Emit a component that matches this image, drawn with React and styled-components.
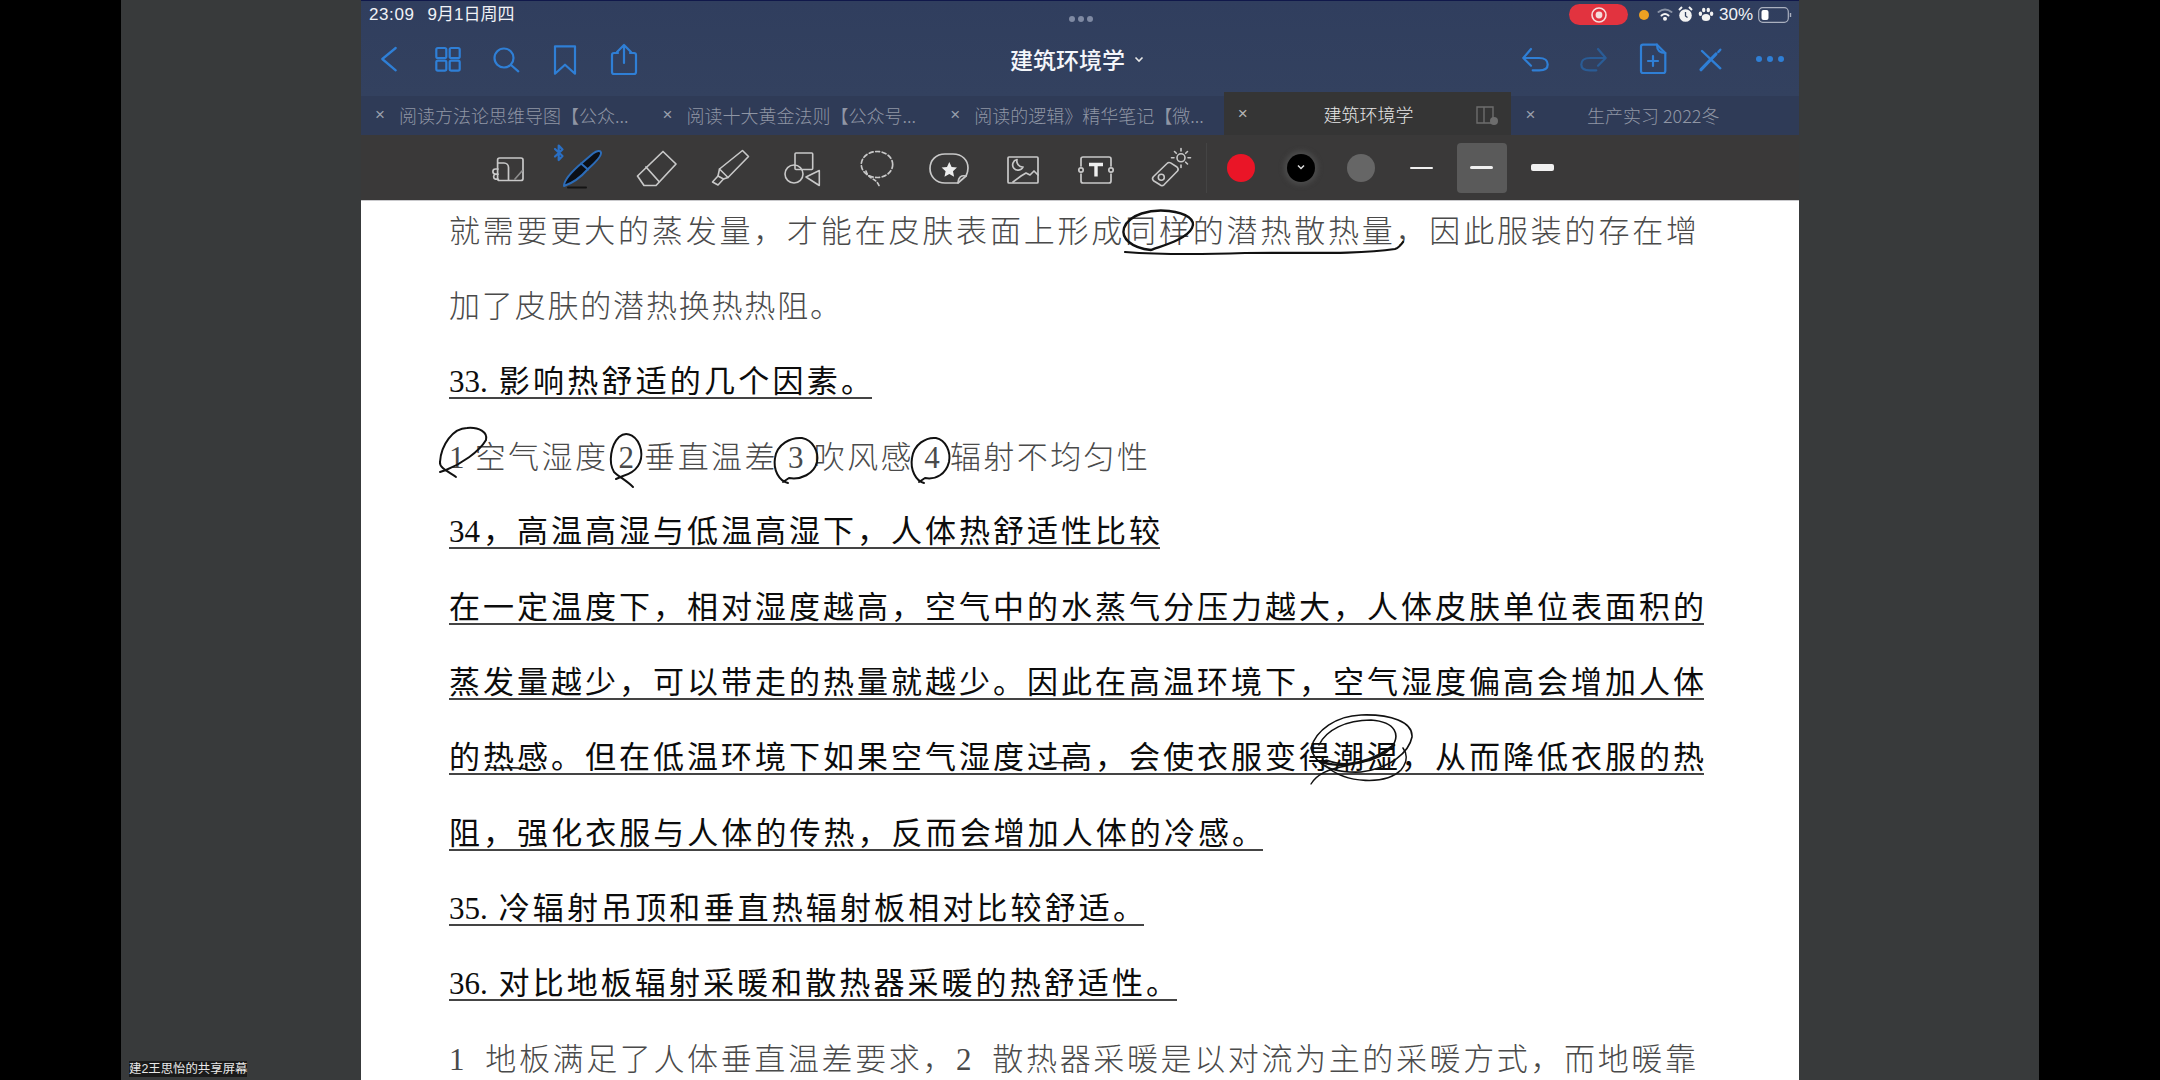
import React from "react";
import styled, { createGlobalStyle } from "styled-components";

const Global = createGlobalStyle`
  html, body { margin: 0; padding: 0; background: #000; }
  body { width: 2160px; height: 1080px; overflow: hidden; font-family: "Liberation Sans", "Noto Sans CJK SC", sans-serif; }
`;

const Screen = styled.div`
  width: 2160px; height: 1080px; display: grid;
  grid-template-columns: 121px 240px 1438px 240px 121px;
  background: #000; overflow: hidden;
`;
const Black = styled.div`background: #000;`;
const Gutter = styled.div`background: #383a3b; position: relative;`;
const ShareLabel = styled.div`
  position: absolute; left: 8px; bottom: 3px; padding: 1px 0; background: #1a1a1a;
  color: #e8e8e8; font-size: 12.4px; line-height: 14px; white-space: nowrap;
`;
const App = styled.div`display: flex; flex-direction: column; height: 1080px; background: #fff; overflow: hidden;`;
const Header = styled.div`background: linear-gradient(#303e5e, #33415f); border-top: 1px solid #10184a; height: 95px; flex: none;`;
const Status = styled.div`
  height: 27px; display: grid; grid-template-columns: 1fr auto 1fr; align-items: center;
  padding: 0 7px 0 8px; color: #f0f2f6; font-size: 17px; line-height: 20px;
`;
const StatusLeft = styled.div`display: flex; align-items: center; gap: 13px;`;
const Time = styled.span`letter-spacing: .6px;`;
const Dots = styled.div`display: flex; gap: 3px; padding-top: 8px;`;
const Dot = styled.span`width: 6px; height: 6px; border-radius: 50%; background: #7f8aa3;`;
const StatusRight = styled.div`display: flex; align-items: center; justify-content: flex-end; gap: 5px;`;
const RecPill = styled.div`
  width: 59px; height: 21px; border-radius: 11px; background: #e2333f; display: flex;
  align-items: center; justify-content: center; margin-right: 6px;
`;
const Orange = styled.span`width: 10px; height: 10px; border-radius: 50%; background: #eda122; margin-right: 2.5px;`;
const Nav = styled.div`height: 62px; display: grid; grid-template-columns: 1fr auto 1fr; align-items: center;`;
const NavGroup = styled.div`display: flex; justify-content: ${p => p.$end ? "flex-end" : "flex-start"}; margin-left: ${p => p.$end ? 0 : -1}px;`;
const NavBtn = styled.div`width: 58.6px; height: 40px; display: flex; align-items: center; justify-content: center; color: ${p => p.$dim ? "#2a5c96" : "#2f7fd6"};`;
const Title = styled.div`display: flex; align-items: center; gap: 9px; margin-left: -6px; color: #f4f6fa; font-size: 23px; font-weight: 500; font-family: "Noto Sans CJK SC", sans-serif;`;
const Tabs = styled.div`height: 39px; flex: none; display: grid; grid-template-columns: repeat(5, 1fr); background: #2f3b57;`;
const Tab = styled.div`
  position: relative; display: flex; align-items: center; padding: 0 0 ${p => p.$active ? 0 : 2}px 14px; gap: 13px; min-width: 0;
  color: ${p => p.$active ? "#e6e6e6" : "#8f96a5"}; font-size: 18px; font-family: "Noto Sans CJK SC", sans-serif;
  font-weight: 300; background: ${p => p.$active ? "#353535" : "transparent"};
  ${p => p.$active ? "margin-top: -4px;" : ""}
`;
const Close = styled.span`font-size: 17px; color: ${p => p.$active ? "#b5b5b5" : "#9aa0ad"}; width: 11px; flex: none; font-family: "Liberation Sans", sans-serif;`;
const TabName = styled.span`white-space: nowrap; ${p => p.$center ? "flex: 1; text-align: center; padding-right: " + p.$center + "px;" : ""}`;
const SplitIcon = styled.span`position: absolute; right: 12px; top: 12px; color: #6d6d6d; display: flex;`;
const Toolbar = styled.div`
  height: 65px; flex: none; background: #3a3939; border-bottom: 1px solid #c9c9cc; display: flex; align-items: center; padding-left: 110px;
`;
const Tool = styled.div`width: 73.55px; height: 64px; flex: none; display: flex; align-items: center; justify-content: center; color: #c8c8c8;`;
const Divider = styled.div`width: 1px; height: 50px; flex: none; background: #444; margin: 0 3.5px 0 0;`;
const Swatch = styled.div`width: 60.2px; height: 64px; flex: none; display: flex; align-items: center; justify-content: center;`;
const Color = styled.span`
  width: 28px; height: 28px; border-radius: 50%; background: ${p => p.$c}; display: flex; align-items: center; justify-content: center;
  ${p => p.$ring ? "box-shadow: 0 0 5px 3px #4c4c4c;" : ""}
`;
const StrokeBox = styled.div`
  width: 50px; height: 50px; border-radius: 4px; display: flex; align-items: center; justify-content: center;
  background: ${p => p.$on ? "#5a5a5a" : "transparent"};
`;
const Stroke = styled.span`width: 23px; height: ${p => p.$h}px; border-radius: 2px; background: #f0f0f0;`;

const Doc = styled.div`position: relative; flex: 1; background: #fff; padding-left: 88px; overflow: hidden;`;
const Lines = styled.div`margin-top: -6.5px; display: flex; flex-direction: column;`;
const Row = styled.div`height: 75.3px; display: flex; align-items: center;`;
const Text = styled.div`
  width: ${p => p.$w}px; height: 30px; line-height: 30px; font-size: 31px;
  text-align: justify; text-align-last: justify; text-justify: inter-character; white-space: nowrap;
  font-family: "Liberation Serif", "Noto Sans CJK SC", serif;
  font-weight: ${p => p.$strong ? 400 : 300};
  color: ${p => p.$strong ? "#0c0c0c" : "#4a4a4a"};
  ${p => p.$strong ? "border-bottom: 2px solid #444;" : ""}
`;
const Ink = styled.svg`position: absolute; left: 0; top: -1px; width: 1438px; height: 880px; pointer-events: none;`;

const N = ({ children, sw = 2.2 }) => (
  <svg width="34" height="34" viewBox="0 0 34 34" fill="none" stroke="currentColor" strokeWidth={sw} strokeLinecap="round" strokeLinejoin="round">{children}</svg>
);
const T = ({ children, sw = 1.7 }) => (
  <svg width="60" height="60" viewBox="0 0 60 60" fill="none" stroke="currentColor" strokeWidth={sw} strokeLinecap="round" strokeLinejoin="round">{children}</svg>
);

const lines = [
  { w: 1248, t: "就需要更大的蒸发量，才能在皮肤表面上形成同样的潜热散热量，因此服装的存在增" },
  { w: 392, t: "加了皮肤的潜热换热热阻。" },
  { w: 423, s: 1, t: "33. 影响热舒适的几个因素。" },
  { w: 699, t: "1 空气湿度 2 垂直温差 3 吹风感 4 辐射不均匀性" },
  { w: 711, s: 1, t: "34，高温高湿与低温高湿下，人体热舒适性比较" },
  { w: 1255, s: 1, t: "在一定温度下，相对湿度越高，空气中的水蒸气分压力越大，人体皮肤单位表面积的" },
  { w: 1255, s: 1, t: "蒸发量越少，可以带走的热量就越少。因此在高温环境下，空气湿度偏高会增加人体" },
  { w: 1255, s: 1, t: "的热感。但在低温环境下如果空气湿度过高，会使衣服变得潮湿，从而降低衣服的热" },
  { w: 814, s: 1, t: "阻，强化衣服与人体的传热，反而会增加人体的冷感。" },
  { w: 695, s: 1, t: "35. 冷辐射吊顶和垂直热辐射板相对比较舒适。" },
  { w: 728, s: 1, t: "36. 对比地板辐射采暖和散热器采暖的热舒适性。" },
  { w: 1247, t: "1\u00a0\u00a0地板满足了人体垂直温差要求，2\u00a0\u00a0散热器采暖是以对流为主的采暖方式，而地暖靠" },
];

export default function Page() {
  return (
    <Screen>
      <Global />
      <Black />
      <Gutter><ShareLabel>建2王思怡的共享屏幕</ShareLabel></Gutter>
      <App>
        <Header>
          <Status>
            <StatusLeft><Time>23:09</Time><span>9月1日周四</span></StatusLeft>
            <Dots><Dot /><Dot /><Dot /></Dots>
            <StatusRight>
              <RecPill>
                <svg width="18" height="18" viewBox="0 0 18 18"><circle cx="9" cy="9" r="7" fill="none" stroke="#f6dcdc" strokeWidth="1.6" /><circle cx="9" cy="9" r="3.4" fill="#f6dcdc" /></svg>
              </RecPill>
              <Orange />
              <svg width="16" height="13" viewBox="0 0 16 13" fill="none" strokeWidth="2" strokeLinecap="round"><path d="M1.5 4C5.5 1 10.5 1 14.5 4" stroke="#8a93a6" /><path d="M4.5 7.5C6.8 5.6 9.2 5.6 11.5 7.5" stroke="#f2f2f2" /><circle cx="8" cy="10.8" r="1" fill="#f2f2f2" stroke="#f2f2f2" /></svg>
              <svg width="15" height="17" viewBox="0 0 15 17"><circle cx="7.5" cy="9.5" r="6.3" fill="#f2f2f2" /><path d="M7.5 6v4l2 1.5" stroke="#33415f" strokeWidth="1.3" fill="none" /><path d="M1 4l3-3M14 4l-3-3" stroke="#f2f2f2" strokeWidth="2" /></svg>
              <svg width="16" height="15" viewBox="0 0 16 15" fill="#f2f2f2"><ellipse cx="8" cy="10.5" rx="4.2" ry="3.6" /><ellipse cx="2.4" cy="6.7" rx="1.7" ry="2.2" /><ellipse cx="13.6" cy="6.7" rx="1.7" ry="2.2" /><ellipse cx="5.7" cy="3" rx="1.7" ry="2.3" /><ellipse cx="10.3" cy="3" rx="1.7" ry="2.3" /></svg>
              <span>30%</span>
              <svg width="34" height="18" viewBox="0 0 34 18"><rect x=".7" y="1.7" width="29.6" height="14.6" rx="4" fill="none" stroke="#aab0bf" strokeWidth="1.2" /><rect x="3.5" y="4" width="7" height="10" rx="2" fill="#fff" /><path d="M32.5 7v4" stroke="#aab0bf" strokeWidth="1.4" /></svg>
            </StatusRight>
          </Status>
          <Nav>
            <NavGroup>
              <NavBtn><N sw={2.3}><path d="M23.7 6 10.3 17l13.4 11.3" /></N></NavBtn>
              <NavBtn><N><rect x="5.3" y="6" width="10" height="10" rx="1.6" /><rect x="18.7" y="6" width="10" height="10" rx="1.6" /><rect x="5.3" y="18.7" width="10" height="10" rx="1.6" /><rect x="18.7" y="18.7" width="10" height="10" rx="1.6" /></N></NavBtn>
              <NavBtn><N><circle cx="15" cy="16" r="9.5" /><path d="m22 23 7.3 6.3" /></N></NavBtn>
              <NavBtn><N><path d="M7 4.3H27V31.7L17 22.7 7 31.7z" /></N></NavBtn>
              <NavBtn><N><path d="M11 11H7a2 2 0 0 0-2 2v17a2 2 0 0 0 2 2h20a2 2 0 0 0 2-2V13a2 2 0 0 0-2-2h-4" /><path d="M17 21V3M10 10l7-7 7 7" /></N></NavBtn>
            </NavGroup>
            <Title>
              建筑环境学
              <svg width="10" height="7" viewBox="0 0 10 7" fill="none" stroke="#e8e8e8" strokeWidth="1.6"><path d="m1.5 1.5 3.5 3.5 3.5-3.5" /></svg>
            </Title>
            <NavGroup $end>
              <NavBtn><N><path d="M13 7 5.3 16l7.7 7.7" /><path d="M6 16H21C27 16 29.7 19 29.7 22.5 29.7 26 27 28.3 21.3 28.3H14.7" /></N></NavBtn>
              <NavBtn $dim><N><g transform="matrix(-1 0 0 1 34 0)"><path d="M13 7 5.3 16l7.7 7.7" /><path d="M6 16H21C27 16 29.7 19 29.7 22.5 29.7 26 27 28.3 21.3 28.3H14.7" /></g></N></NavBtn>
              <NavBtn><N><path d="M7 2.7H21L29.3 11V29a2 2 0 0 1-2 2H7a2 2 0 0 1-2-2V4.7a2 2 0 0 1 2-2z" /><path d="M21 2.7C21 8 23 10.7 29.3 11" /><path d="M17 14v10M12 19h10" /></N></NavBtn>
              <NavBtn><N sw={2.4}><path d="M8 9 26.3 26.3" /><path d="M7 27.7 22 12" strokeWidth="3.2" /><path d="M24.3 10l2-2.3" /></N></NavBtn>
              <NavBtn><svg width="32" height="8" viewBox="0 0 32 8" fill="currentColor"><circle cx="5" cy="4" r="3" /><circle cx="16" cy="4" r="3" /><circle cx="27" cy="4" r="3" /></svg></NavBtn>
            </NavGroup>
          </Nav>
        </Header>
        <Tabs>
          <Tab><Close>×</Close><TabName>阅读方法论思维导图【公众...</TabName></Tab>
          <Tab><Close>×</Close><TabName>阅读十大黄金法则【公众号...</TabName></Tab>
          <Tab><Close>×</Close><TabName>阅读的逻辑》精华笔记【微...</TabName></Tab>
          <Tab $active>
            <Close $active>×</Close><TabName $center={36}>建筑环境学</TabName>
            <SplitIcon><svg width="24" height="24" viewBox="0 0 24 24" fill="none" stroke="currentColor" strokeWidth="1.4"><path d="M2 3h16v16H2zM9 3v16" /><circle cx="19" cy="17" r="4" fill="#6d6d6d" stroke="none" /></svg></SplitIcon>
          </Tab>
          <Tab><Close>×</Close><TabName $center={42}>生产实习 2022冬</TabName></Tab>
        </Tabs>
        <Toolbar>
          <Tool><T>
            <rect x="19.6" y="20" width="25.4" height="22.5" rx="2" />
            <path d="M20 25h6a4.5 4.5 0 0 1 4.5 4.5V42" />
            <path d="M20 31h-2.5a2.6 2.6 0 0 0 0 5.2H20M20 36.2h-2.5a2.6 2.6 0 0 0 0 5H20" />
            <path d="M37 41 44 33" stroke="#8c8c8c" />
          </T></Tool>
          <Tool><T>
            <path d="M4 11 11.5 18 7.7 22V7.5L11.5 11.5 4 18.5" stroke="#2a6fc4" strokeWidth="2.2" />
            <path d="M13 48C13 42 20 34 32 24L42 15.5C46 12.5 49.5 12 50 14.5 50.5 17 46 23 37 31 30 39 22 45 13 48Z" fill="#0b0f16" stroke="#2c6cb8" strokeWidth="2" />
            <path d="M30 25.5 37 31.5" stroke="#2c6cb8" strokeWidth="2" />
            <path d="M17 49.5H35" stroke="#141414" strokeWidth="2" />
          </T></Tool>
          <Tool><T>
            <path d="M38 13.5 51 26 31 47.5H19L12.5 38Z" />
            <path d="M21 29 34 43.5" />
          </T></Tool>
          <Tool><T sw={1.6}>
            <path d="M44.5 12.5 50.5 18.5 30 39.5 21.5 31Z" />
            <path d="M21.5 31 20 38 14.5 44 20 47 25.5 41 30 39.5" />
            <path d="M20 38 25.5 41" />
          </T></Tool>
          <Tool><T sw={1.6}>
            <rect x="23" y="15" width="17.7" height="16.5" rx="1" />
            <circle cx="22" cy="36" r="9" />
            <path d="M47.3 32.5V47.5L34 39Z" />
          </T></Tool>
          <Tool><T>
            <ellipse cx="31" cy="26.5" rx="15.7" ry="13" strokeDasharray="4 2.6" />
            <path d="M20 33C22 41 30 40 33 47.5" strokeDasharray="3 2.6" />
          </T></Tool>
          <Tool><T>
            <path d="M26 16H34C43 16 49 22 49 30 49 33 48 36 47 38L39 45H26C17 45 11 38.5 11 30.5 11 22 17 16 26 16Z" />
            <path d="M47 38C42 37 39.5 39 39 45" />
            <path d="M30.3 24l2.3 5 5.4.6-4 3.7 1.1 5.4-4.8-2.7-4.8 2.7 1.1-5.4-4-3.7 5.4-.6z" fill="#ececec" stroke="none" />
          </T></Tool>
          <Tool><T>
            <rect x="15" y="19" width="30" height="26" rx="1" />
            <path d="M24 21.5a5.4 5.4 0 1 0 6 7.5 6 6 0 0 1-6-7.5z" />
            <path d="M20 44 28 38 33 35 37 37 41 33 45 37" />
          </T></Tool>
          <Tool><T>
            <path d="M15 28V21a2 2 0 0 1 2-2H43a2 2 0 0 1 2 2V28M15 36V43a2 2 0 0 0 2 2H43a2 2 0 0 0 2-2V36" />
            <circle cx="15" cy="32" r="2.2" />
            <circle cx="45" cy="32" r="2.2" />
            <path d="M23 26.5H37M30 26.5V38.5" stroke="#efefef" strokeWidth="3.4" strokeLinecap="butt" />
          </T></Tool>
          <Tool><T sw={1.6}>
            <path d="M27 25.5a3 3 0 0 1 3.6-.6L37 29a3 3 0 0 1 .5 4L24 46.8a3 3 0 0 1-4 0l-6.5-4a3 3 0 0 1-.2-4z" />
            <circle cx="21.3" cy="39.2" r="3" />
            <circle cx="41" cy="19.8" r="4" />
            <path d="M41 10.5v2.5M41 27v2.5M31.5 19.8H34M48 19.8h2.5M34.5 13.5l1.8 1.8M47.5 13.5l-1.8 1.8M47.5 26l-1.8-1.8" />
          </T></Tool>
          <Divider />
          <Swatch><Color $c="#ea1527" /></Swatch>
          <Swatch><Color $c="#000" $ring><svg width="10" height="7" viewBox="0 0 10 7" fill="none" stroke="#ddd" strokeWidth="1.5"><path d="m2 1.5 3 3 3-3" /></svg></Color></Swatch>
          <Swatch><Color $c="#666" /></Swatch>
          <Swatch><Stroke $h={2} /></Swatch>
          <Swatch><StrokeBox $on><Stroke $h={3} /></StrokeBox></Swatch>
          <Swatch><Stroke $h={7} /></Swatch>
        </Toolbar>
        <Doc>
          <Lines>
            {lines.map((l, i) => (
              <Row key={i}><Text $w={l.w} $strong={l.s}>{l.t}</Text></Row>
            ))}
          </Lines>
          <Ink viewBox="0 0 1438 880" fill="none" stroke="#111" strokeWidth="2" strokeLinecap="round" strokeLinejoin="round">
            <path d="M790 50C770 48 760 38 763 28 768 14 790 9 808 11 826 13 835 20 831 28 825 40 800 46 790 50" strokeWidth="2.4" />
            <path d="M764 52c40 3 90 2 120 1 50-1 110 2 150-4 3-1 6-4 8-7" strokeWidth="2.2" />
            <path d="M95 277C88 272 78 268 79 262 80 245 92 228 106 228 118 227 127 232 125 240 118 252 100 264 85 270L79 272" />
            <path d="M272 287C265 280 258 277 253 272 247 262 250 245 258 237 266 230 277 236 280 250 282 262 276 272 262 276L255 279" />
            <path d="M427 283C418 281 412 270 414 258 416 244 430 237 441 238 452 240 458 252 456 262 453 274 440 280 428 278L422 282" />
            <path d="M563 283C555 281 549 270 551 258 553 244 565 237 575 238 585 240 590 252 588 262 585 274 575 280 564 278L558 282" />
            <path d="M950 548C955 530 975 516 1000 515 1030 514 1052 522 1051 537 1048 552 1030 568 1000 572 975 573 955 568 950 548" strokeWidth="1.6" />
            <path d="M958 545C965 530 985 520 1010 520 1035 522 1040 535 1030 548 1018 562 985 568 965 560" strokeWidth="1.6" />
            <path d="M960 562C985 570 1015 560 1033 545" strokeWidth="2.6" />
            <path d="M950 584C957 572 972 568 985 566" strokeWidth="1.4" />
            <path d="M965 566C985 584 1025 585 1040 570 1048 560 1045 552 1042 548" strokeWidth="1.6" />
            <path d="M127 567c12 3 30-2 40 3M685 563c10-2 22 2 30-2" strokeWidth="1.5" />
          </Ink>
        </Doc>
      </App>
      <Gutter />
      <Black />
    </Screen>
  );
}
